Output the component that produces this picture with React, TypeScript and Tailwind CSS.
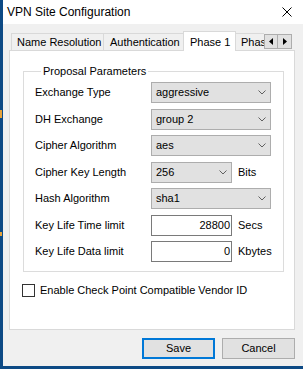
import React from "react";

const font = { fontFamily: '"Liberation Sans", Arial, sans-serif' };

function Chevron() {
  return (
    <svg width="8" height="5" viewBox="0 0 8 5" className="shrink-0">
      <polyline points="0.5,0.5 4,4 7.5,0.5" fill="none" stroke="#606060" strokeWidth="1" />
    </svg>
  );
}

function Select({ value, wide = true }: { value: string; wide?: boolean }) {
  return (
    <div
      className={`${wide ? "w-[120px]" : "w-[81px]"} h-[21px] bg-[#e1e1e1] border border-[#adadad] flex items-center justify-between pl-[4px] pr-[4px] text-black`}
    >
      <span>{value}</span>
      <Chevron />
    </div>
  );
}

function Input({ value }: { value: string }) {
  return (
    <div className="w-[81px] h-[21px] bg-white border border-[#7a7a7a] flex items-center justify-end pr-[1px] text-black">
      <span>{value}</span>
    </div>
  );
}

function Row({ label, children, unit }: { label: string; children: React.ReactNode; unit?: string }) {
  return (
    <div className="flex items-center h-[21px]">
      <div className="w-[116px] shrink-0">{label}</div>
      {children}
      {unit && <span className="ml-[6px]">{unit}</span>}
    </div>
  );
}

export default function App() {
  return (
    <div className="w-[303px] h-[369px] overflow-hidden bg-[#0d4a85] relative text-[11px] leading-[13px] text-black" style={font}>
      <div className="absolute left-0 top-[110px] w-[2px] h-[8px] bg-[#e8a33a]" />
      <div className="absolute left-0 top-[232px] w-[2px] h-[4px] bg-[#e8a33a]" />
      <div className="ml-[3px] w-[300px] h-[366px] bg-[#f0f0f0] flex flex-col">
        {/* Title bar */}
        <div className="h-[24px] bg-white flex items-center justify-between pl-[4px] pr-[11px] shrink-0">
          <span className="text-[12px] leading-[14px] text-black">VPN Site Configuration</span>
          <svg width="10" height="10" viewBox="0 0 10 10">
            <path d="M0.5 0.5 L9.5 9.5 M9.5 0.5 L0.5 9.5" stroke="#000" strokeWidth="1" fill="none" />
          </svg>
        </div>
        {/* Body */}
        <div className="flex-1 pl-[6px] pt-[7px]">
          {/* Tabs */}
          <div className="flex items-end h-[19px] pl-[2px]">
            <div className="w-[93px] h-[17px] border border-b-0 border-[#d9d9d9] bg-[#f0f0f0] flex items-center pl-[5px]">
              Name Resolution
            </div>
            <div className="w-[81px] h-[17px] -ml-px border border-b-0 border-[#d9d9d9] bg-[#f0f0f0] flex items-center pl-[6px]">
              Authentication
            </div>
            <div className="relative z-10 w-[53px] h-[20px] -ml-px -mb-px border border-b-0 border-[#d9d9d9] bg-white flex items-start pt-[4px] pl-[6px]">
              Phase 1
            </div>
            <div className="w-[29px] h-[17px] -ml-px border-t border-l border-[#d9d9d9] bg-[#f0f0f0] flex items-center pl-[5px] overflow-hidden whitespace-nowrap">
              Phase 2
            </div>
            <div className="flex mb-[1px]">
              <div className="w-[14px] h-[15px] bg-[#e1e1e1] border border-[#adadad] flex items-center justify-center">
                <svg width="4" height="7" viewBox="0 0 4 7">
                  <polygon points="4,0 0,3.5 4,7" fill="#000" />
                </svg>
              </div>
              <div className="w-[14px] h-[15px] bg-[#e1e1e1] border border-l-0 border-[#adadad] flex items-center justify-center">
                <svg width="4" height="7" viewBox="0 0 4 7">
                  <polygon points="0,0 4,3.5 0,7" fill="#000" />
                </svg>
              </div>
            </div>
          </div>
          {/* Panel */}
          <div className="w-[286px] h-[280px] border border-[#d9d9d9] bg-white pl-[12px] pt-[14px]">
            <fieldset className="ml-px w-[260px] border border-[#dcdcdc] px-[11px] pb-[9px]">
              <legend className="ml-[6px] px-[2px] text-[11px] leading-[13px]">Proposal Parameters</legend>
              <div className="flex flex-col gap-[5.5px] pt-[4px]">
                <Row label="Exchange Type">
                  <Select value="aggressive" />
                </Row>
                <Row label="DH Exchange">
                  <Select value="group 2" />
                </Row>
                <Row label="Cipher Algorithm">
                  <Select value="aes" />
                </Row>
                <Row label="Cipher Key Length" unit="Bits">
                  <Select value="256" wide={false} />
                </Row>
                <Row label="Hash Algorithm">
                  <Select value="sha1" />
                </Row>
                <Row label="Key Life Time limit" unit="Secs">
                  <Input value="28800" />
                </Row>
                <Row label="Key Life Data limit" unit="Kbytes">
                  <Input value="0" />
                </Row>
              </div>
            </fieldset>
            <div className="mt-[12px] flex items-center">
              <div className="w-[13px] h-[13px] border border-[#333333] bg-white shrink-0" />
              <span className="ml-[5px]">Enable Check Point Compatible Vendor ID</span>
            </div>
          </div>
          {/* Buttons */}
          <div className="w-[286px] mt-[8px] flex justify-end gap-[7px]">
            <div className="w-[73px] h-[21px] bg-[#e1e1e1] border-2 border-[#0078d7] flex items-center justify-center">
              Save
            </div>
            <div className="w-[73px] h-[21px] bg-[#e1e1e1] border border-[#adadad] flex items-center justify-center">
              Cancel
            </div>
          </div>
        </div>
      </div>
    </div>
  );
}
